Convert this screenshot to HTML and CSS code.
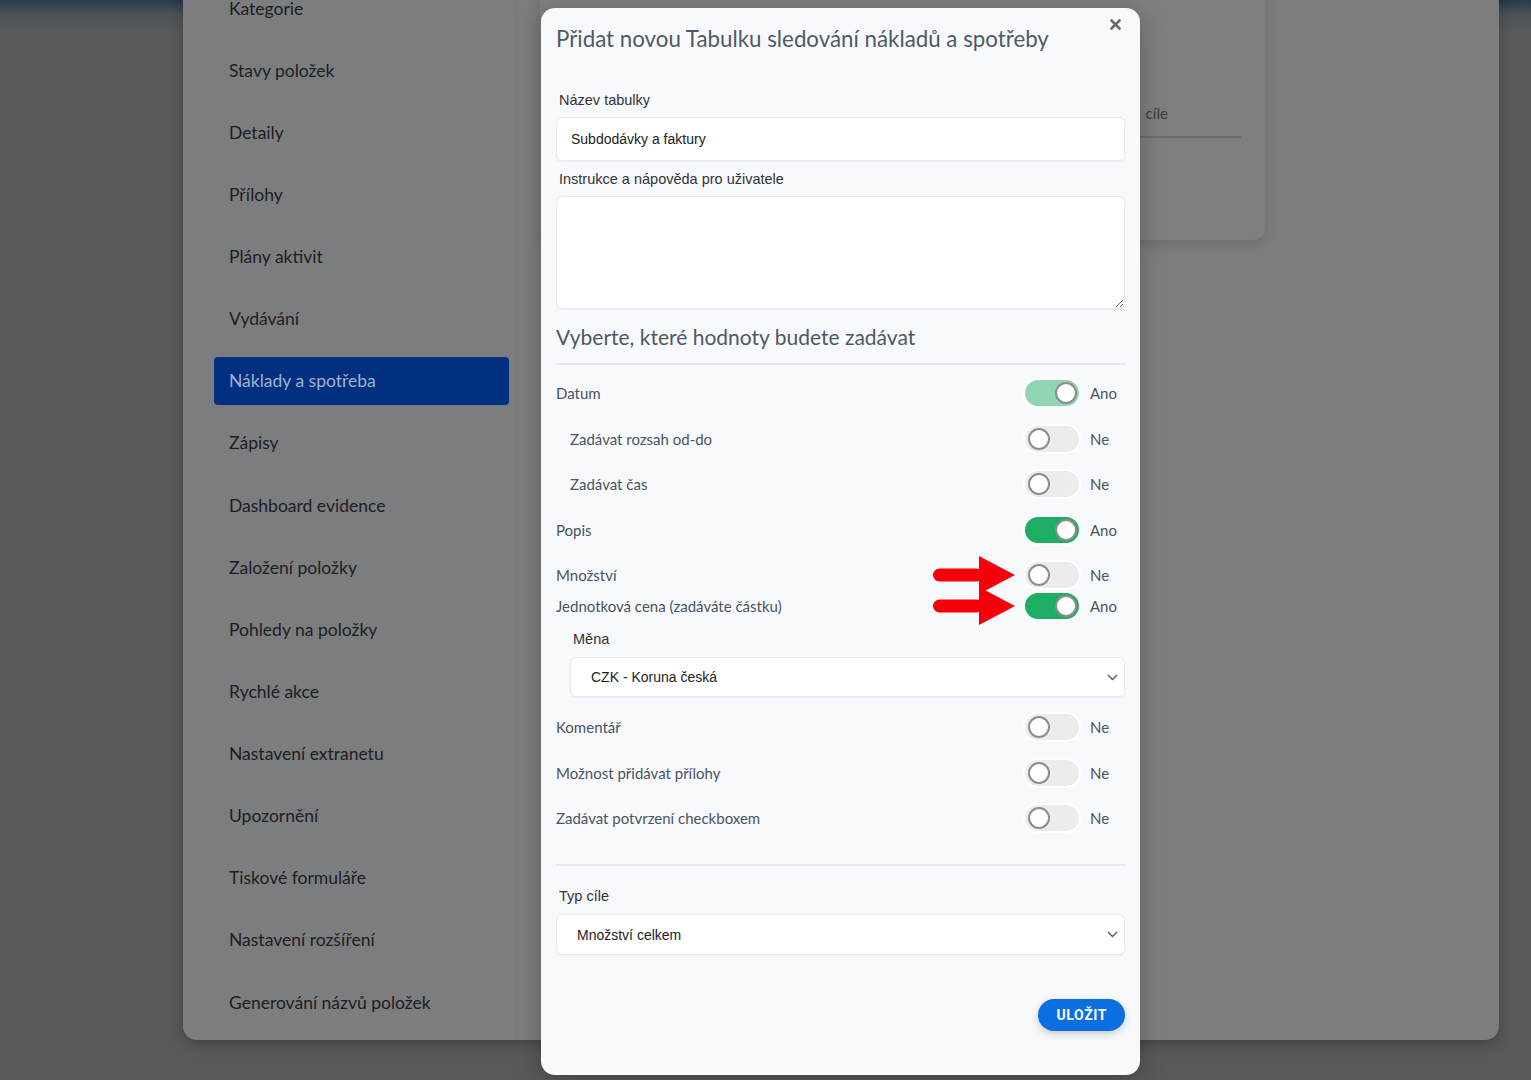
FILE: index.html
```html
<!DOCTYPE html>
<html lang="cs">
<head>
  <meta charset="UTF-8" />
  <title>Náklady a spotřeba</title>
  <link rel="stylesheet" href="styles.css">
</head>
<body>

<div class="desktop">
  <div class="app">
    <!-- Left menu of the settings page -->
    <nav class="sidebar">
      <div class="menu-item">Kategorie</div>
      <div class="menu-item">Stavy položek</div>
      <div class="menu-item">Detaily</div>
      <div class="menu-item">Přílohy</div>
      <div class="menu-item">Plány aktivit</div>
      <div class="menu-item">Vydávání</div>
      <div class="menu-item active">Náklady a spotřeba</div>
      <div class="menu-item">Zápisy</div>
      <div class="menu-item">Dashboard evidence</div>
      <div class="menu-item">Založení položky</div>
      <div class="menu-item">Pohledy na položky</div>
      <div class="menu-item">Rychlé akce</div>
      <div class="menu-item">Nastavení extranetu</div>
      <div class="menu-item">Upozornění</div>
      <div class="menu-item">Tiskové formuláře</div>
      <div class="menu-item">Nastavení rozšíření</div>
      <div class="menu-item">Generování názvů položek</div>
    </nav>

    <main class="main">
      <div class="card">
        <div class="card-head"><span>Typ cíle</span></div>
      </div>
    </main>
  </div>

  <!-- Modal dialog -->
  <div class="modal">
    <button class="close-btn" aria-label="Zavřít">
      <svg width="11" height="11" viewBox="0 0 11 11">
        <path d="M1.5 1.5 L9.5 9.5 M9.5 1.5 L1.5 9.5" stroke="#6b6b6b" stroke-width="2.6" stroke-linecap="round"/>
      </svg>
    </button>

    <h2 class="modal-title">Přidat novou Tabulku sledování nákladů a spotřeby</h2>

    <label class="field-label first">Název tabulky</label>
    <input class="text-input" type="text" value="Subdodávky a faktury" />

    <label class="field-label">Instrukce a nápověda pro uživatele</label>
    <textarea class="text-area"></textarea>

    <h3 class="section-title">Vyberte, které hodnoty budete zadávat</h3>
    <div class="divider top"></div>

    <div class="toggle-row">
      <span class="row-label">Datum</span>
      <span class="switch on muted"><span class="knob"></span></span>
      <span class="state">Ano</span>
    </div>
    <div class="toggle-row">
      <span class="row-label sub">Zadávat rozsah od-do</span>
      <span class="switch"><span class="knob"></span></span>
      <span class="state">Ne</span>
    </div>
    <div class="toggle-row">
      <span class="row-label sub">Zadávat čas</span>
      <span class="switch"><span class="knob"></span></span>
      <span class="state">Ne</span>
    </div>
    <div class="toggle-row">
      <span class="row-label">Popis</span>
      <span class="switch on"><span class="knob"></span></span>
      <span class="state">Ano</span>
    </div>
    <div class="toggle-row tight">
      <span class="row-label">Množství</span>
      <svg class="pointer" width="82" height="38" viewBox="0 0 82 38">
        <rect x="0" y="12.5" width="50" height="13" rx="6.5" fill="#f5000b"/>
        <polygon points="46,0 82,19 46,38" fill="#f5000b"/>
      </svg>
      <span class="switch"><span class="knob"></span></span>
      <span class="state">Ne</span>
    </div>
    <div class="toggle-row last">
      <span class="row-label">Jednotková cena (zadáváte částku)</span>
      <svg class="pointer" width="82" height="38" viewBox="0 0 82 38">
        <rect x="0" y="12.5" width="50" height="13" rx="6.5" fill="#f5000b"/>
        <polygon points="46,0 82,19 46,38" fill="#f5000b"/>
      </svg>
      <span class="switch on"><span class="knob"></span></span>
      <span class="state">Ano</span>
    </div>

    <label class="field-label sub-label">Měna</label>
    <div class="select currency">
      <span>CZK - Koruna česká</span>
      <svg width="11" height="7" viewBox="0 0 11 7">
        <path d="M1 1 L5.5 5.5 L10 1" fill="none" stroke="#555" stroke-width="1.3"/>
      </svg>
    </div>

    <div class="toggle-row after-select">
      <span class="row-label">Komentář</span>
      <span class="switch"><span class="knob"></span></span>
      <span class="state">Ne</span>
    </div>
    <div class="toggle-row">
      <span class="row-label">Možnost přidávat přílohy</span>
      <span class="switch"><span class="knob"></span></span>
      <span class="state">Ne</span>
    </div>
    <div class="toggle-row">
      <span class="row-label">Zadávat potvrzení checkboxem</span>
      <span class="switch"><span class="knob"></span></span>
      <span class="state">Ne</span>
    </div>

    <div class="divider bottom"></div>

    <label class="field-label goal-label">Typ cíle</label>
    <div class="select goal">
      <span>Množství celkem</span>
      <svg width="11" height="7" viewBox="0 0 11 7">
        <path d="M1 1 L5.5 5.5 L10 1" fill="none" stroke="#555" stroke-width="1.3"/>
      </svg>
    </div>

    <div class="actions">
      <button class="save-btn">ULOŽIT</button>
    </div>
  </div>
</div>

</body>
</html>
```

FILE: styles.css
```css
/* Page background (desktop behind the window) */
body {
  margin: 0;
  height: 1080px;
  overflow: hidden;
  background: linear-gradient(to bottom, #27394a 0px, #4c5257 14px, #595959 34px);
}

.desktop {
  display: flow-root;
  position: relative;
  height: 1080px;
  padding-left: 183px;
  box-sizing: border-box;
}

/* The dimmed application window */
.app {
  display: flex;
  width: 1316px;
  height: 1080px;
  margin-top: -40px;
  background-color: #7c7d7f;
  border-radius: 0 0 14px 14px;
  box-shadow: 0 4px 14px rgba(0, 0, 0, 0.25);
  overflow: hidden;
}

/* Left menu */
.sidebar {
  width: 334px;
  box-sizing: border-box;
  padding: 24px 7px 0 31px;
  border-right: 1px solid rgba(0, 0, 0, 0.035);
  font-family: Lato, "Noto Sans", sans-serif;
  font-size: 17.5px;
  color: #1c1d1f;
}

.menu-item {
  display: flex;
  align-items: center;
  height: 48px;
  margin-bottom: 14.125px;
  padding-left: 15px;
  border-radius: 4px;
}

.menu-item.active {
  background-color: #00307f;
  color: #a3b1cd;
}

/* Content area behind the modal */
.main {
  flex: 1;
  padding-left: 23px;
}

.card {
  width: 725px;
  height: 280px;
  box-sizing: border-box;
  padding: 140px 24px 0 0;
  background-color: #7d7e80;
  border-radius: 0 0 12px 12px;
  box-shadow: 0 5px 14px rgba(0, 0, 0, 0.12);
}

.card-head {
  margin-left: 400px;
  padding: 0 0 10px 171px;
  border-bottom: 2px solid #6b6c6e;
  font-family: Lato, "Noto Sans", sans-serif;
  font-size: 15px;
  line-height: 26px;
  word-spacing: 7px;
  color: #3a3b3d;
}

/* Modal */
.modal {
  position: absolute;
  top: 8px;
  left: 541px;
  width: 599px;
  height: 1067px;
  box-sizing: border-box;
  padding: 0 15px;
  background-color: #f7f9fc;
  border-radius: 14px;
  box-shadow: 0 6px 24px rgba(0, 0, 0, 0.25);
  display: flex;
  flex-direction: column;
}

.close-btn {
  position: absolute;
  top: 5px;
  right: 14px;
  width: 22px;
  height: 22px;
  padding: 0;
  border: none;
  background: none;
  display: flex;
  align-items: center;
  justify-content: center;
  cursor: pointer;
}

.modal-title {
  margin: 16px 0 0;
  font-family: Lato, "Noto Sans", sans-serif;
  font-weight: 400;
  font-size: 22.3px;
  line-height: 30px;
  color: #4f5a65;
}

.field-label {
  display: block;
  margin-top: 9px;
  padding-left: 3px;
  font-family: "Liberation Sans", Arial, sans-serif;
  font-size: 14.5px;
  line-height: 18px;
  color: #333;
}

.field-label.first {
  margin-top: 37px;
}

.text-input,
.text-area,
.select {
  box-sizing: border-box;
  margin-top: 8px;
  background-color: #fff;
  border: 1px solid #e7eaef;
  border-radius: 6px;
  box-shadow: 0 1px 2px rgba(0, 0, 0, 0.05);
  font-family: "Liberation Sans", Arial, sans-serif;
  font-size: 14px;
  color: #222;
}

.text-input {
  height: 44px;
  padding: 0 14px;
  outline: none;
}

.text-area {
  height: 113px;
  resize: vertical;
  outline: none;
}

.section-title {
  margin: 14px 0 0;
  font-family: Lato, "Noto Sans", sans-serif;
  font-weight: 400;
  font-size: 21px;
  line-height: 28px;
  color: #4d5965;
}

.divider {
  height: 2px;
  background-color: #e5e8ec;
}

.divider.top {
  margin-top: 12px;
  margin-bottom: 13px;
}

.divider.bottom {
  margin-top: 15.5px;
}

/* Toggle rows */
.toggle-row {
  position: relative;
  display: flex;
  align-items: center;
  height: 30px;
  margin-bottom: 15.5px;
  font-family: Lato, "Noto Sans", sans-serif;
  font-size: 15px;
  color: #4a5460;
}

.toggle-row.tight {
  margin-bottom: 1px;
}

.toggle-row.last {
  margin-bottom: 0;
}

.toggle-row.after-select {
  margin-top: 15px;
}

.row-label {
  flex: 1;
}

.row-label.sub {
  padding-left: 14px;
}

.switch {
  position: relative;
  width: 54px;
  height: 26px;
  border-radius: 13px;
  background-color: #ececec;
  box-shadow: 0 0 0 2px #fff;
}

.switch.on {
  background-color: #1eae63;
}

.switch.on.muted {
  background-color: #91d5b5;
}

.knob {
  position: absolute;
  top: 2px;
  left: 3px;
  width: 22px;
  height: 22px;
  box-sizing: border-box;
  border: 2px solid #8d8d8d;
  border-radius: 50%;
  background-color: #fff;
}

.switch.on .knob {
  left: 30px;
}

.state {
  width: 35px;
  margin-left: 11px;
}

/* Red arrows pointing at the switches */
.pointer {
  position: absolute;
  right: 110px;
  top: -4px;
}

.sub-label {
  margin-top: 9px;
  padding-left: 17px;
}

.select {
  display: flex;
  align-items: center;
  justify-content: space-between;
  padding: 0 6px 0 20px;
}

.select.currency {
  height: 40px;
  margin-top: 9px;
  margin-left: 14px;
}

.goal-label {
  margin-top: 21px;
}

.select.goal {
  height: 41px;
  margin-top: 9px;
}

.actions {
  display: flex;
  justify-content: flex-end;
  margin-top: 44px;
}

.save-btn {
  height: 32px;
  padding: 0 18px;
  border: none;
  border-radius: 16px;
  background-color: #0b6fe0;
  color: #fff;
  font-family: Roboto, "Liberation Sans", sans-serif;
  font-weight: 700;
  font-size: 14px;
  letter-spacing: 0.6px;
  box-shadow: 0 3px 8px rgba(0, 0, 0, 0.18);
  cursor: pointer;
}
```
